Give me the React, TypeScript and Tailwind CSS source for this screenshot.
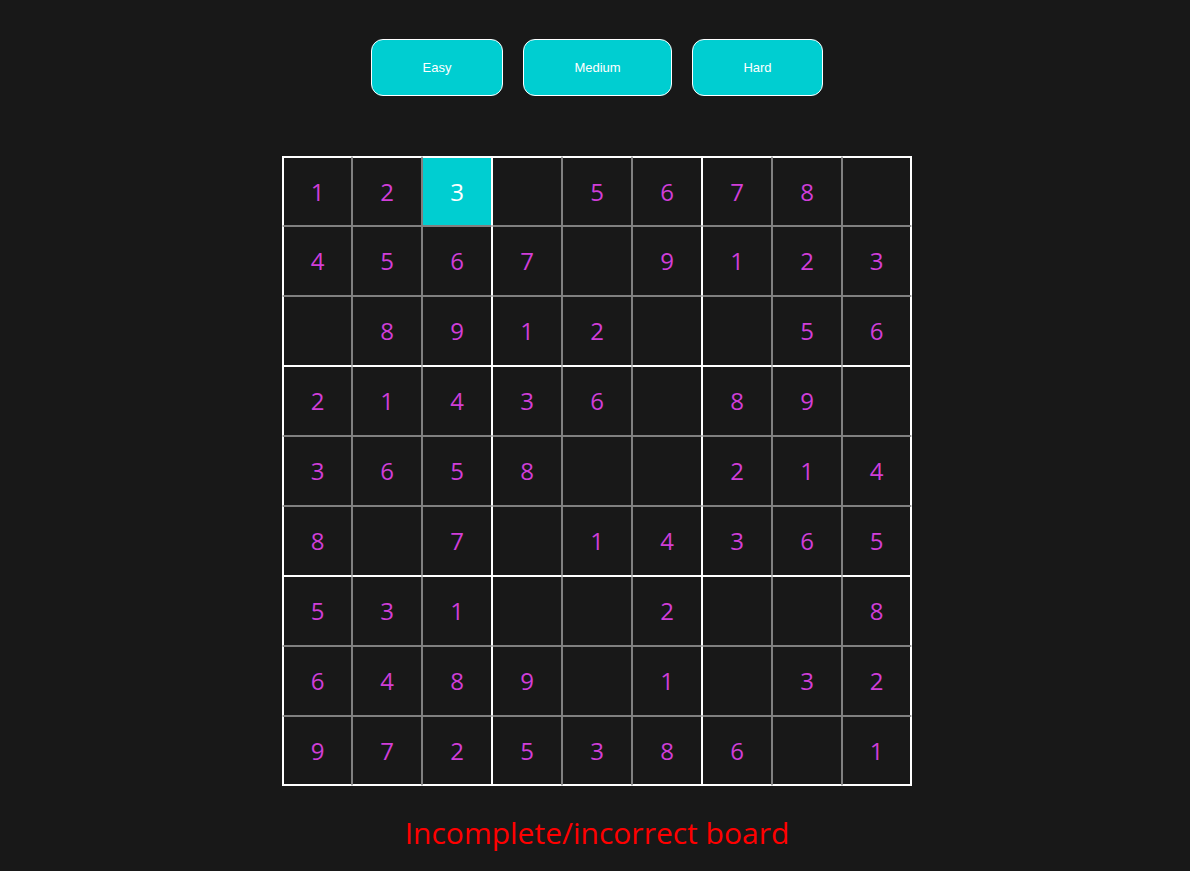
const board = [
  '123.5678.',
  '4567.9123',
  '.8912..56',
  '21436.89.',
  '3658..214',
  '8.7.14365',
  '531..2..8',
  '6489.1.32',
  '9725386.1',
];

function cellClass(r: number, c: number) {
  const left = c % 3 === 0 ? 'border-l-white' : 'border-l-[#808080]';
  const right = c % 3 === 2 ? 'border-r-white' : 'border-r-[#808080]';
  const top = r % 3 === 0 ? 'border-t-white' : 'border-t-[#808080]';
  const bottom = r % 3 === 2 ? 'border-b-white' : 'border-b-[#808080]';
  const outer = [
    c === 0 ? 'border-l-2' : '',
    c === 8 ? 'border-r-2' : '',
    r === 0 ? 'border-t-2' : '',
    r === 8 ? 'border-b-2' : '',
  ].join(' ');
  return `${left} ${right} ${top} ${bottom} ${outer}`;
}

const levels = [
  { name: 'Easy', w: 'w-[132px]' },
  { name: 'Medium', w: 'w-[149px]' },
  { name: 'Hard', w: 'w-[131px]' },
];

export default function App() {
  return (
    <div className="min-h-[100vh] w-full bg-[#181818] flex flex-col items-center pt-[39px]">
      <div className="flex gap-[20px] ml-[4px]">
        {levels.map((l) => (
          <button
            key={l.name}
            className={`h-[57px] ${l.w} rounded-[12px] border border-white bg-[#00ced1] text-white text-[13px] font-['Liberation_Sans',Arial,sans-serif]`}
          >
            {l.name}
          </button>
        ))}
      </div>

      <div className="mt-[60px] ml-[4px] grid grid-cols-9 w-[630px]">
        {board.map((row, r) =>
          row.split('').map((ch, c) => {
            const selected = r === 0 && c === 2;
            return (
              <div
                key={`${r}-${c}`}
                className={`h-[70px] border flex items-center justify-center text-[24px] font-['Open_Sans',sans-serif] ${cellClass(r, c)} ${
                  selected ? 'bg-[#00ced1] text-white' : 'text-[#d03ed8]'
                }`}
              >
                {ch === '.' ? '' : ch}
              </div>
            );
          })
        )}
      </div>

      <p className="mt-[24px] ml-[4px] text-[30px] text-[#ff0000] font-['Open_Sans',sans-serif]">
        Incomplete/incorrect board
      </p>
    </div>
  );
}
